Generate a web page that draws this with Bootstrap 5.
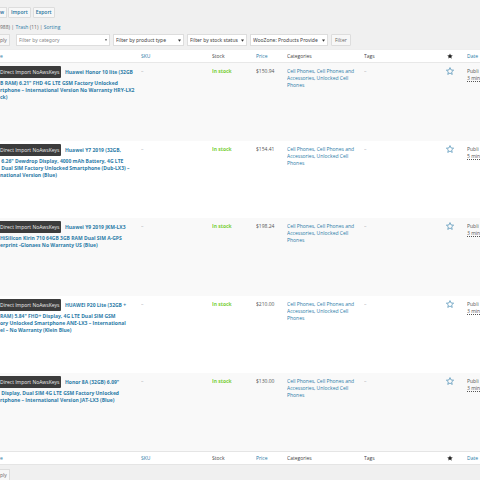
<!DOCTYPE html>
<html lang="en">
<head>
<meta charset="utf-8">
<meta name="viewport" content="width=device-width, initial-scale=1">
<title>Products</title>
<link rel="stylesheet" href="https://cdn.jsdelivr.net/npm/bootstrap@5.3.0/dist/css/bootstrap.min.css">
<style>
body{background:#f0f0f0;color:#555;font-family:"Open Sans","Noto Sans",sans-serif;font-size:5px;line-height:7px;overflow-x:hidden}
a{color:#2b7ba7;text-decoration:none}
.actions{padding-top:7px;gap:3px}
.actions .btn,.bulk .btn{font-size:5px;line-height:7px;border-radius:1px;border:1px solid #ddd;background:#f7f7f7;white-space:nowrap}
.actions .btn{color:#23719c;font-weight:600;padding:1px 2px;margin-left:-1px}
.actions .btn:first-child{margin-left:0;margin-right:-1px;border-left:0;padding-left:0;border-top-left-radius:0;border-bottom-left-radius:0}
.views{margin-top:6px;height:8px;color:#666}
.bulk{gap:3px;padding-top:2px}
.bulk .btn{color:#666;height:12px;padding:2px 3px;line-height:6px}
.bulk .cut{width:10px;margin-right:3px;padding-left:0;border-left:0;text-align:left;border-top-left-radius:0;border-bottom-left-radius:0}
.bulk select{height:12px;border:1px solid #ddd;border-radius:0;padding:0 7px 0 2px;font-family:"Noto Sans",sans-serif;font-size:5px;line-height:10px;color:#444;min-width:0;appearance:none;background:#fff url("data:image/svg+xml,%3Csvg xmlns='http://www.w3.org/2000/svg' viewBox='0 0 4 4'%3E%3Cpath d='M0 .5h4L2 3.8z' fill='%23333'/%3E%3C/svg%3E") no-repeat right 2px center/3px 3px}
.bulk .by-category{width:94px;color:#888;background-size:2px 2px}
.by-type{width:71px}.by-status{width:60px}.by-zone{width:78px}
.products{table-layout:fixed;width:100%;margin-top:3px;background:#fff;border-collapse:separate;border-spacing:0}
.products thead th,.products tfoot th{font-weight:400;height:14px;padding:0;vertical-align:middle;white-space:nowrap;overflow:hidden;color:#444}
.products thead th{border-bottom:1px solid #e8e8e8;border-top:1px solid #eee}
.products tfoot th{border-top:1px solid #e5e5e5;border-bottom:1px solid #e5e5e5}
.products tbody td{height:77px;padding:5px 0 0;vertical-align:top;white-space:nowrap;overflow:hidden}
.products tbody tr:nth-child(odd) td{height:78px;background:#f9f9f9}
.c-sku{width:71px}.c-stock{width:44px}.c-price{width:31px}.c-cat{width:77px}.c-tags{width:82px}.c-star{width:21px}.c-date{width:13px}
.products tbody td.name{padding-top:3px}
.products tbody td.feature{padding-top:4px}
.name a{font-weight:700;color:#2b7ba7}
.tip{display:inline-block;background:#3c3c3c;color:#eee;height:12px;line-height:12px;width:61px;border-radius:0 1px 1px 0;margin-right:4px}
.rest{display:block}
.first{height:14px;line-height:12px}
.instock{color:#7ad03a;font-weight:700}
.dash{color:#aaa}
.star{width:8px;height:8px;display:block}
.date u{text-decoration:underline dotted}
.below{padding-top:4px}
</style>
<script src="https://cdn.jsdelivr.net/npm/bootstrap@5.3.0/dist/js/bootstrap.bundle.min.js"></script>
</head>
<body>
<svg class="d-none" xmlns="http://www.w3.org/2000/svg"><symbol id="star-shape" viewBox="0 0 20 20"><path d="M10 1.5l2.6 5.9 6.4.6-4.8 4.3 1.4 6.3L10 15.2l-5.6 3.3 1.4-6.3L1 8l6.4-.6z"/></symbol></svg>
<header>
<div class="actions d-flex">
<a class="btn" href="#">w</a><a class="btn" href="#">Import</a><a class="btn" href="#">Export</a>
</div>
<nav class="views">988) | <a href="#">Trash</a> (11) | <a href="#">Sorting</a></nav>
<form class="bulk d-flex">
<button type="button" class="btn cut">ply</button>
<select class="by-category" aria-label="Category"><option>Filter by category</option></select>
<select class="by-type" aria-label="Product type"><option>Filter by product type</option></select>
<select class="by-status" aria-label="Stock status"><option>Filter by stock status</option></select>
<select class="by-zone" aria-label="WooZone"><option>WooZone: Products Provide</option></select>
<button type="button" class="btn">Filter</button>
</form>
</header>
<main>
<table class="products">
<colgroup><col><col class="c-sku"><col class="c-stock"><col class="c-price"><col class="c-cat"><col class="c-tags"><col class="c-star"><col class="c-date"></colgroup>
<thead><tr><th><a href="#">e</a></th><th><a href="#">SKU</a></th><th>Stock</th><th><a href="#">Price</a></th><th>Categories</th><th>Tags</th><th><svg class="star" fill="#222" viewBox="-3 -3 26 26" role="img" aria-label="Featured"><use href="#star-shape" width="20" height="20"/></svg></th><th><a href="#">Date</a></th></tr></thead>
<tbody>
<tr><td class="name"><div class="first"><span class="tip">Direct Import NoAwsKeys</span><a href="#">Huawei Honor 10 lite (32GB</a></div><a class="rest" href="#">B RAM) 6.21" FHD 4G LTE GSM Factory Unlocked<br>rtphone – International Version No Warranty HRY-LX2<br>ck)</a></td><td class="dash">–</td><td class="instock">In stock</td><td>$150.94</td><td><a href="#">Cell Phones, Cell Phones and<br>Accessories, Unlocked Cell<br>Phones</a></td><td class="dash">–</td><td class="feature"><svg class="star" fill="none" stroke="#2b7ba7" stroke-width="1.5" viewBox="0 0 20 20"><use href="#star-shape"/></svg></td><td class="date">Publi<br><u>3 min</u></td></tr>
<tr><td class="name"><div class="first"><span class="tip">Direct Import NoAwsKeys</span><a href="#">Huawei Y7 2019 (32GB,</a></div><a class="rest" href="#">&nbsp;6.26" Dewdrop Display, 4000 mAh Battery, 4G LTE<br>&nbsp;Dual SIM Factory Unlocked Smartphone (Dub-LX3) –<br>national Version (Blue)</a></td><td class="dash">–</td><td class="instock">In stock</td><td>$154.41</td><td><a href="#">Cell Phones, Cell Phones and<br>Accessories, Unlocked Cell<br>Phones</a></td><td class="dash">–</td><td class="feature"><svg class="star" fill="none" stroke="#2b7ba7" stroke-width="1.5" viewBox="0 0 20 20"><use href="#star-shape"/></svg></td><td class="date">Publi<br><u>5 min</u></td></tr>
<tr><td class="name"><div class="first"><span class="tip">Direct Import NoAwsKeys</span><a href="#">Huawei Y9 2019 JKM-LX3</a></div><a class="rest" href="#">HiSilicon Kirin 710 64GB 3GB RAM Dual SIM A-GPS<br>erprint -Glonaes No Warranty US (Blue)</a></td><td class="dash">–</td><td class="instock">In stock</td><td>$198.24</td><td><a href="#">Cell Phones, Cell Phones and<br>Accessories, Unlocked Cell<br>Phones</a></td><td class="dash">–</td><td class="feature"><svg class="star" fill="none" stroke="#2b7ba7" stroke-width="1.5" viewBox="0 0 20 20"><use href="#star-shape"/></svg></td><td class="date">Publi<br><u>3 min</u></td></tr>
<tr><td class="name"><div class="first"><span class="tip">Direct Import NoAwsKeys</span><a href="#">HUAWEI P20 Lite (32GB +</a></div><a class="rest" href="#">RAM) 5.84" FHD+ Display, 4G LTE Dual SIM GSM<br>ory Unlocked Smartphone ANE-LX3 – International<br>el – No Warranty (Klein Blue)</a></td><td class="dash">–</td><td class="instock">In stock</td><td>$210.00</td><td><a href="#">Cell Phones, Cell Phones and<br>Accessories, Unlocked Cell<br>Phones</a></td><td class="dash">–</td><td class="feature"><svg class="star" fill="none" stroke="#2b7ba7" stroke-width="1.5" viewBox="0 0 20 20"><use href="#star-shape"/></svg></td><td class="date">Publi<br><u>3 min</u></td></tr>
<tr><td class="name"><div class="first"><span class="tip">Direct Import NoAwsKeys</span><a href="#">Honor 8A (32GB) 6.09"</a></div><a class="rest" href="#">&nbsp;Display, Dual SIM 4G LTE GSM Factory Unlocked<br>rtphone – International Version JAT-LX3 (Blue)</a></td><td class="dash">–</td><td class="instock">In stock</td><td>$130.00</td><td><a href="#">Cell Phones, Cell Phones and<br>Accessories, Unlocked Cell<br>Phones</a></td><td class="dash">–</td><td class="feature"><svg class="star" fill="none" stroke="#2b7ba7" stroke-width="1.5" viewBox="0 0 20 20"><use href="#star-shape"/></svg></td><td class="date">Publi<br><u>3 min</u></td></tr>
</tbody>
<tfoot><tr><th><a href="#">e</a></th><th><a href="#">SKU</a></th><th>Stock</th><th><a href="#">Price</a></th><th>Categories</th><th>Tags</th><th><svg class="star" fill="#222" viewBox="-3 -3 26 26" role="img" aria-label="Featured"><use href="#star-shape" width="20" height="20"/></svg></th><th><a href="#">Date</a></th></tr></tfoot>
</table>
<div class="bulk below d-flex"><button type="button" class="btn cut">ply</button></div>
</main>
</body>
</html>
